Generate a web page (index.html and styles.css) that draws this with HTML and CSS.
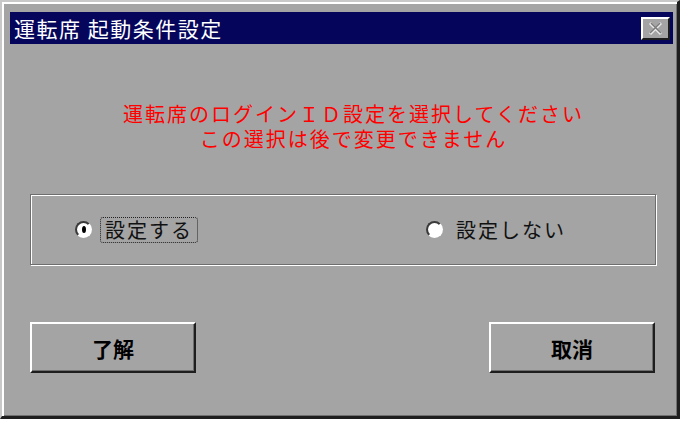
FILE: index.html
```html
<!DOCTYPE html>
<html lang="ja">
<head>
    <meta charset="UTF-8">
    <title>運転席 起動条件設定</title>
    <link rel="stylesheet" href="styles.css">
</head>
<body>
    <div class="window">
        <div class="titlebar">
            <span class="title">運転席 起動条件設定</span>
            <span class="close">
                <svg width="19" height="15" viewBox="0 0 19 15">
                    <path d="M4 2 L15 13 M15 2 L4 13" stroke="#e8e8e8" stroke-width="3"/>
                    <path d="M5 2 L15 12 M14 2 L4 12" stroke="#7a7a7a" stroke-width="1.6"/>
                </svg>
            </span>
        </div>

        <div class="message">
            <p>運転席のログインＩＤ設定を選択してください</p>
            <p>この選択は後で変更できません</p>
        </div>

        <div class="groupbox">
            <label class="option">
                <span class="radio checked"></span>
                <span class="label focused">設定する</span>
            </label>
            <label class="option">
                <span class="radio"></span>
                <span class="label">設定しない</span>
            </label>
        </div>

        <div class="buttons">
            <button class="btn">了解</button>
            <button class="btn">取消</button>
        </div>
    </div>
</body>
</html>
```

FILE: styles.css
```css
body {
    margin: 0;
    background-color: #ffffff;
    font-family: "Noto Sans CJK JP", sans-serif;
}

.window {
    width: 680px;
    height: 419px;
    box-sizing: border-box;
    background-color: #a4a4a4;
    border-top: 2px solid #c8c8c8;
    border-left: 2px solid #c8c8c8;
    border-right: 3px solid #1e1e1e;
    border-bottom: 3px solid #1e1e1e;
    box-shadow: inset 2px 2px #ffffff, inset -1px -1px #707070;
    padding: 10px 4px 0 8px;
}

.titlebar {
    height: 32px;
    background-color: #05055c;
    display: flex;
    align-items: center;
    justify-content: space-between;
    padding: 0 3px 0 4px;
}

.title {
    color: #ffffff;
    font-size: 21px;
    line-height: 24px;
    letter-spacing: 1.5px;
}

.close {
    width: 25px;
    height: 19px;
    background-color: #a4a4a4;
    border-top: 2px solid #ffffff;
    border-left: 2px solid #ffffff;
    border-right: 2px solid #1e1e1e;
    border-bottom: 2px solid #1e1e1e;
    display: flex;
    align-items: center;
    justify-content: center;
}

.message {
    margin-top: 57px;
    padding-left: 24px;
    text-align: center;
    color: #ff0000;
    font-size: 20px;
    line-height: 25px;
    letter-spacing: 2px;
}

.message p {
    margin: 0;
}

.groupbox {
    margin: 43px 0 0 20px;
    width: 626px;
    height: 71px;
    box-sizing: border-box;
    border: 1px solid #6e6e6e;
    box-shadow: inset 1px 1px #ffffff, 1px 1px #ffffff;
    display: grid;
    grid-template-columns: 351px auto;
    align-items: center;
    padding-left: 44px;
}

.option {
    display: flex;
    align-items: center;
    gap: 8px;
}

.radio {
    width: 13px;
    height: 13px;
    border-radius: 50%;
    background-color: #ffffff;
    border: 2px solid;
    border-color: #3a3a3a #ffffff #ffffff #3a3a3a;
    display: flex;
    align-items: center;
    justify-content: center;
}

.radio.checked::after {
    content: "";
    width: 4px;
    height: 7px;
    border-radius: 50%;
    background-color: #000000;
}

.label {
    font-size: 20px;
    line-height: 24px;
    letter-spacing: 2px;
    color: #111111;
    padding: 0 4px 0 4px;
    border: 1px solid transparent;
}

.label.focused {
    border: 1px dotted #222222;
    border-radius: 3px;
}

.buttons {
    margin-top: 57px;
    display: flex;
    justify-content: space-between;
    padding: 0 18px 0 20px;
}

.btn {
    width: 166px;
    height: 51px;
    background-color: #a4a4a4;
    border-top: 2px solid #ffffff;
    border-left: 2px solid #ffffff;
    border-right: 2px solid #1e1e1e;
    border-bottom: 2px solid #1e1e1e;
    box-shadow: inset -1px -1px #6e6e6e;
    font-family: "Noto Sans CJK JP", sans-serif;
    font-size: 21px;
    font-weight: bold;
    color: #000000;
    padding: 0;
}
```
